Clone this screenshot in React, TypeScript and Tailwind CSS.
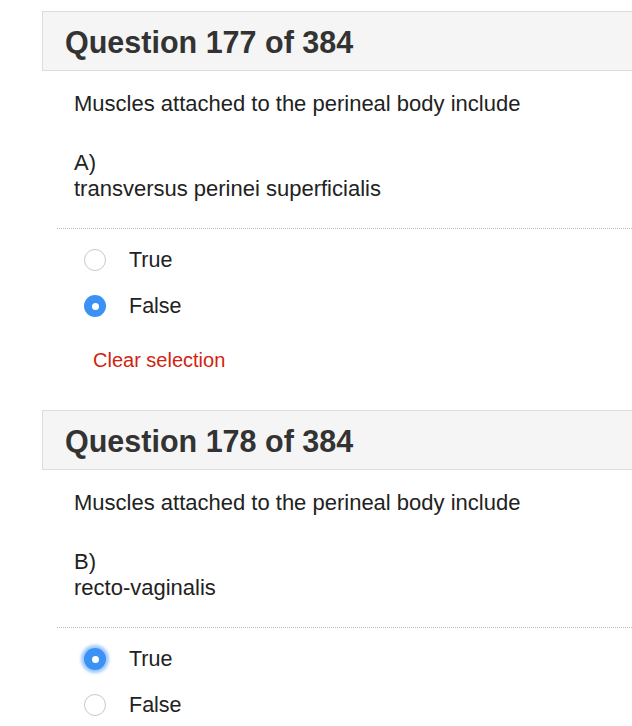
import React from "react";

function Radio({ checked, focus }: { checked: boolean; focus?: boolean }) {
  if (checked) {
    return (
      <span
        className={
          "flex h-[22px] w-[22px] items-center justify-center rounded-full bg-[#3b92f4] " +
          (focus ? "shadow-[0_0_3px_3px_rgba(80,155,245,0.55)]" : "")
        }
      >
        <span className="h-[7px] w-[7px] rounded-full bg-white" />
      </span>
    );
  }
  return <span className="block h-[22px] w-[22px] rounded-full border border-[#c8c8c8] bg-white" />;
}

function Question({
  num,
  letter,
  answer,
  value,
  focus,
  showClear,
}: {
  num: number;
  letter: string;
  answer: string;
  value: "True" | "False";
  focus?: boolean;
  showClear?: boolean;
}) {
  return (
    <div className="mt-[11px]">
      <div className="ml-[42px] flex h-[60px] items-center border-y border-l border-[#dcdcdc] bg-[#f5f5f5] pl-[22px] pt-[2px]">
        <h2 className="text-[30.5px] font-bold text-[#333333] leading-none">Question {num} of 384</h2>
      </div>
      <div className="ml-[74px] mt-[20px] text-[22px] leading-[26px] text-[#222222]">
        Muscles attached to the perineal body include
      </div>
      <div className="ml-[74px] mt-[33px] text-[22px] leading-[26px] text-[#222222]">
        <div>{letter})</div>
        <div>{answer}</div>
      </div>
      <div className="ml-[57px] mt-[26px] border-t border-dotted border-[#bdbdbd]" />
      <div className="mt-[8px]">
        {(["True", "False"] as const).map((opt) => (
          <div key={opt} className="flex h-[46px] items-center pl-[84px]">
            <Radio checked={value === opt} focus={focus && value === opt} />
            <span className="ml-[23px] text-[21.5px] text-[#222222]">{opt}</span>
          </div>
        ))}
      </div>
      {showClear && (
        <div className="ml-[93px] mt-[18px] text-[20px] leading-[26px] text-[#d02410]">Clear selection</div>
      )}
      {showClear && <div className="h-[26px]" />}
    </div>
  );
}

export default function App() {
  return (
    <div
      className="h-[726px] w-[632px] overflow-hidden bg-white"
      style={{ fontFamily: '"Liberation Sans", Arial, sans-serif' }}
    >
      <Question num={177} letter="A" answer="transversus perinei superficialis" value="False" showClear />
      <Question num={178} letter="B" answer="recto-vaginalis" value="True" focus />
    </div>
  );
}
